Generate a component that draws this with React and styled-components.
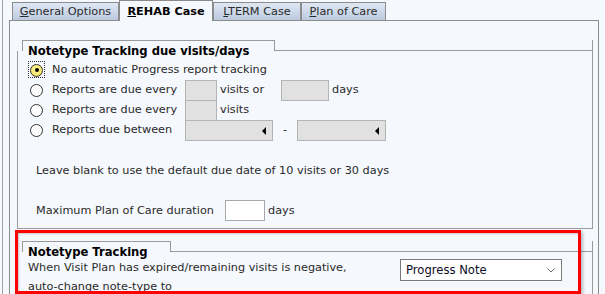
import React from 'react';
import styled, { createGlobalStyle } from 'styled-components';

const GlobalStyle = createGlobalStyle`
  html, body {
    margin: 0;
    padding: 0;
    background: #f5f8fd;
  }
  body {
    font-family: "DejaVu Sans", Verdana, sans-serif;
    font-size: 11.25px;
    color: #2a2a2a;
  }
`;

const Screen = styled.div`
  width: 605px;
  height: 294px;
  overflow: hidden;
  padding-left: 2px;
  box-sizing: border-box;
`;

const Frame = styled.div`
  height: 100%;
  border-left: 1px solid #a3a3a3;
  padding-left: 6px;
`;

const TabStrip = styled.div`
  display: flex;
  align-items: flex-end;
  height: 20px;
  padding-left: 3px;
  position: relative;
  z-index: 1;
`;

const Tab = styled.div`
  box-sizing: border-box;
  width: ${(p) => p.$w}px;
  height: ${(p) => (p.$active ? 21 : 18)}px;
  margin-bottom: ${(p) => (p.$active ? -1 : 0)}px;
  border: 1px solid #8c8c8c;
  border-bottom: none;
  background: ${(p) =>
    p.$active ? '#f5f8fd' : 'linear-gradient(#dfe7f3, #bccbe0)'};
  font-weight: ${(p) => (p.$active ? 'bold' : 'normal')};
  color: ${(p) => (p.$active ? '#000' : '#2a2a2a')};
  display: flex;
  align-items: center;
  justify-content: center;
  padding-top: ${(p) => (p.$active ? 1 : 0)}px;
  white-space: nowrap;
  u {
    text-decoration: underline;
  }
`;

const Panel = styled.div`
  width: 590px;
  height: 300px;
  box-sizing: border-box;
  border: 1px solid #8c8c8c;
  border-bottom: none;
  padding: 19px 5px 0 7px;
`;

const Group = styled.div`
  position: relative;
  margin-top: ${(p) => p.$top || 0}px;
`;

const GroupHead = styled.div`
  display: flex;
  height: 11px;
  padding-left: 5px;
`;

const Legend = styled.div`
  box-sizing: border-box;
  width: ${(p) => p.$w}px;
  height: 11px;
  border: 1px solid #9a9a9a;
  border-bottom: none;
  padding: 2px 0 0 5px;
  font-weight: bold;
  font-size: 11.6px;
  color: #000;
  line-height: 16px;
  white-space: nowrap;
`;

const HeadLine = styled.div`
  flex: 1;
  border-bottom: 1px solid #9a9a9a;
  border-right: 1px solid #9a9a9a;
`;

const GroupBody = styled.div`
  border: 1px solid #9a9a9a;
  border-top: none;
  padding: ${(p) => p.$pad};
`;

const Row = styled.div`
  display: flex;
  align-items: flex-start;
  height: 20px;
  line-height: 20px;
`;

const RadioCell = styled.div`
  position: relative;
  width: 13px;
  height: 20px;
  display: flex;
  align-items: center;
  justify-content: center;
`;

const Radio = styled.span`
  box-sizing: border-box;
  width: 13px;
  height: 13px;
  border-radius: 50%;
  border: 1px solid #333;
  background: ${(p) =>
    p.$checked ? 'radial-gradient(circle at 45% 40%, #fff7a0, #efd94a)' : '#fff'};
  display: flex;
  align-items: center;
  justify-content: center;
  &::after {
    content: '';
    display: ${(p) => (p.$checked ? 'block' : 'none')};
    width: 4px;
    height: 4px;
    border-radius: 50%;
    background: #000;
  }
`;

const Focus = styled.span`
  position: absolute;
  left: -2px;
  top: 1px;
  width: 17px;
  height: 17px;
  box-sizing: border-box;
  border: 1px dotted #333;
`;

const Label = styled.span`
  width: ${(p) => p.$w}px;
  margin-left: ${(p) => p.$ml || 0}px;
  white-space: nowrap;
`;

const Field = styled.span`
  box-sizing: border-box;
  width: ${(p) => p.$w}px;
  height: 21px;
  border: 1px solid ${(p) => (p.$white ? '#a8a8a8' : '#b4b4b4')};
  background: ${(p) => (p.$white ? '#fff' : '#e1e1e1')};
  flex-shrink: 0;
`;

const Unit = styled.span`
  margin-left: 3px;
  width: ${(p) => (p.$w ? `${p.$w}px` : 'auto')};
  white-space: nowrap;
`;

const Combo = styled.span`
  box-sizing: border-box;
  width: ${(p) => p.$w}px;
  height: 21px;
  border: 1px solid #b4b4b4;
  background: #e1e1e1;
  display: flex;
  align-items: center;
  justify-content: flex-end;
  padding-right: 6px;
  &::after {
    content: '';
    border-top: 4px solid transparent;
    border-bottom: 4px solid transparent;
    border-right: 4px solid #000;
  }
`;

const Dash = styled.span`
  width: 24px;
  text-align: center;
`;

const Note = styled.div`
  margin: ${(p) => p.$mt}px 0 0 6px;
  line-height: 16px;
  white-space: nowrap;
`;

const FieldRow = styled.div`
  display: flex;
  align-items: center;
  height: 21px;
  margin: ${(p) => p.$mt}px 0 0 6px;
`;

const TrackRow = styled.div`
  display: flex;
  align-items: flex-start;
`;

const TrackText = styled.div`
  width: 372px;
  line-height: 19px;
  margin-top: -1px;
`;

const Dropdown = styled.div`
  box-sizing: border-box;
  width: 162px;
  height: 22px;
  border: 1px solid #7a7a7a;
  background: #fff;
  display: flex;
  align-items: center;
  justify-content: space-between;
  padding: 0 6px 0 5px;
  color: #0c0c26;
  font-size: 11.6px;
`;

const Highlight = styled.div`
  position: absolute;
  left: -2px;
  top: -11px;
  width: 566px;
  height: 64px;
  box-sizing: border-box;
  border: 3px solid #ff0000;
  box-shadow: 2px 2px 3px rgba(0, 0, 0, 0.25), inset 1px 1px 2px rgba(0, 0, 0, 0.2);
  pointer-events: none;
`;

export default function App() {
  return (
    <Screen>
      <GlobalStyle />
      <Frame>
        <TabStrip>
          <Tab $w={107}>
            <span><u>G</u>eneral Options</span>
          </Tab>
          <Tab $w={94} $active>
            <span><u>R</u>EHAB Case</span>
          </Tab>
          <Tab $w={88}>
            <span><u>L</u>TERM Case</span>
          </Tab>
          <Tab $w={85}>
            <span><u>P</u>lan of Care</span>
          </Tab>
        </TabStrip>
        <Panel>
          <Group>
            <GroupHead>
              <Legend $w={253}>Notetype Tracking due visits/days</Legend>
              <HeadLine />
            </GroupHead>
            <GroupBody $pad="9px 0 7px 12px">
              <Row>
                <RadioCell>
                  <Focus />
                  <Radio $checked />
                </RadioCell>
                <Label $ml={9}>No automatic Progress report tracking</Label>
              </Row>
              <Row>
                <RadioCell>
                  <Radio />
                </RadioCell>
                <Label $ml={9} $w={133}>Reports are due every</Label>
                <Field $w={32} />
                <Unit $w={61}>visits or</Unit>
                <Field $w={48} />
                <Unit>days</Unit>
              </Row>
              <Row>
                <RadioCell>
                  <Radio />
                </RadioCell>
                <Label $ml={9} $w={133}>Reports are due every</Label>
                <Field $w={32} />
                <Unit>visits</Unit>
              </Row>
              <Row>
                <RadioCell>
                  <Radio />
                </RadioCell>
                <Label $ml={9} $w={133}>Reports due between</Label>
                <Combo $w={88} />
                <Dash>-</Dash>
                <Combo $w={89} />
              </Row>
              <Note $mt={23}>
                Leave blank to use the default due date of 10 visits or 30 days
              </Note>
              <FieldRow $mt={21}>
                <Label $w={189}>Maximum Plan of Care duration</Label>
                <Field $w={40} $white />
                <Unit>days</Unit>
              </FieldRow>
            </GroupBody>
          </Group>
          <Group $top={12}>
            <GroupHead>
              <Legend $w={149}>Notetype Tracking</Legend>
              <HeadLine />
            </GroupHead>
            <GroupBody $pad="7px 0 20px 10px">
              <TrackRow>
                <TrackText>
                  When Visit Plan has expired/remaining visits is negative,
                  <br />
                  auto-change note-type to
                </TrackText>
                <Dropdown>
                  <span>Progress Note</span>
                  <svg width="8" height="5" viewBox="0 0 8 5">
                    <polyline points="0.5,0.5 4,4 7.5,0.5" fill="none" stroke="#6b6b6b" strokeWidth="1" />
                  </svg>
                </Dropdown>
              </TrackRow>
            </GroupBody>
            <Highlight />
          </Group>
        </Panel>
      </Frame>
    </Screen>
  );
}
